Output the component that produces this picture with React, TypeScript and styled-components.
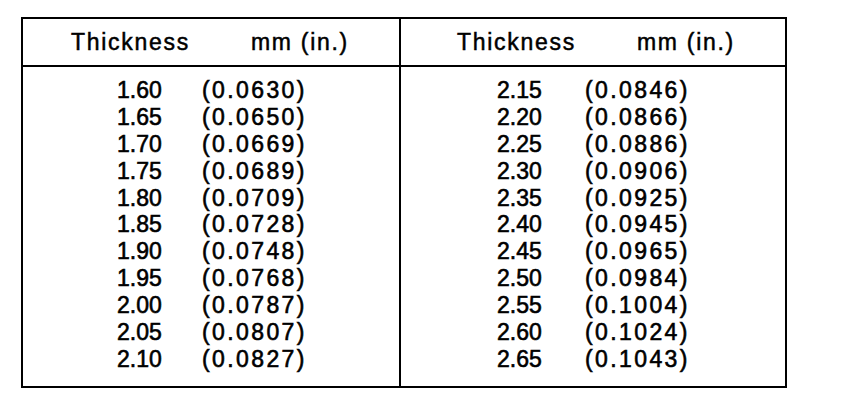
import styled, { createGlobalStyle } from 'styled-components';

const GlobalStyle = createGlobalStyle`
	html, body {
		margin: 0;
		padding: 0;
		background: #ffffff;
	}
	body {
		font-family: "Liberation Sans", Arial, sans-serif;
		color: #000000;
	}
`;

const Page = styled.div`
	width: 864px;
	height: 404px;
	padding: 17px 0 0 21px;
	box-sizing: border-box;
`;

const Table = styled.div`
	width: 766px;
	height: 371px;
	box-sizing: border-box;
	border: 2px solid #000;
	display: grid;
	grid-template-columns: 378px 1fr;
	grid-template-rows: 48px 1fr;
`;

const HeaderCell = styled.div<{ $last?: boolean }>`
	display: flex;
	align-items: center;
	padding-left: ${(p) => (p.$last ? '56px' : '48px')};
	border-bottom: 2px solid #000;
	border-right: ${(p) => (p.$last ? 'none' : '2px solid #000')};
	font-size: 23px;
	letter-spacing: 1.7px;
	-webkit-text-stroke: 0.5px #000;
	white-space: nowrap;
`;

const HeadThickness = styled.span`
	width: 180px;
`;

const Body = styled.div<{ $last?: boolean }>`
	padding: 10px 0 0 ${(p) => (p.$last ? '96px' : '94px')};
	border-right: ${(p) => (p.$last ? 'none' : '2px solid #000')};
	display: grid;
	grid-template-columns: ${(p) => (p.$last ? '88px' : '85px')} auto;
	grid-auto-rows: 26.9px;
	align-content: start;
	font-size: 23px;
	-webkit-text-stroke: 0.6px #000;
	white-space: nowrap;
`;

const Mm = styled.span`
	line-height: 26.9px;
`;

const Inch = styled.span`
	line-height: 26.9px;
	letter-spacing: 2.4px;
`;

const left: [string, string][] = [
	['1.60', '0.0630'],
	['1.65', '0.0650'],
	['1.70', '0.0669'],
	['1.75', '0.0689'],
	['1.80', '0.0709'],
	['1.85', '0.0728'],
	['1.90', '0.0748'],
	['1.95', '0.0768'],
	['2.00', '0.0787'],
	['2.05', '0.0807'],
	['2.10', '0.0827'],
];

const right: [string, string][] = [
	['2.15', '0.0846'],
	['2.20', '0.0866'],
	['2.25', '0.0886'],
	['2.30', '0.0906'],
	['2.35', '0.0925'],
	['2.40', '0.0945'],
	['2.45', '0.0965'],
	['2.50', '0.0984'],
	['2.55', '0.1004'],
	['2.60', '0.1024'],
	['2.65', '0.1043'],
];

const Rows = ({ data }: { data: [string, string][] }) => (
	<>
		{data.map(([mm, inch]) => [
			<Mm key={mm}>{mm}</Mm>,
			<Inch key={inch}>({inch})</Inch>,
		])}
	</>
);

const App = () => {
	return (
		<>
			<GlobalStyle />
			<Page>
				<Table>
					<HeaderCell>
						<HeadThickness>Thickness</HeadThickness>
						<span>mm (in.)</span>
					</HeaderCell>
					<HeaderCell $last>
						<HeadThickness>Thickness</HeadThickness>
						<span>mm (in.)</span>
					</HeaderCell>
					<Body>
						<Rows data={left} />
					</Body>
					<Body $last>
						<Rows data={right} />
					</Body>
				</Table>
			</Page>
		</>
	);
};

export default App;
